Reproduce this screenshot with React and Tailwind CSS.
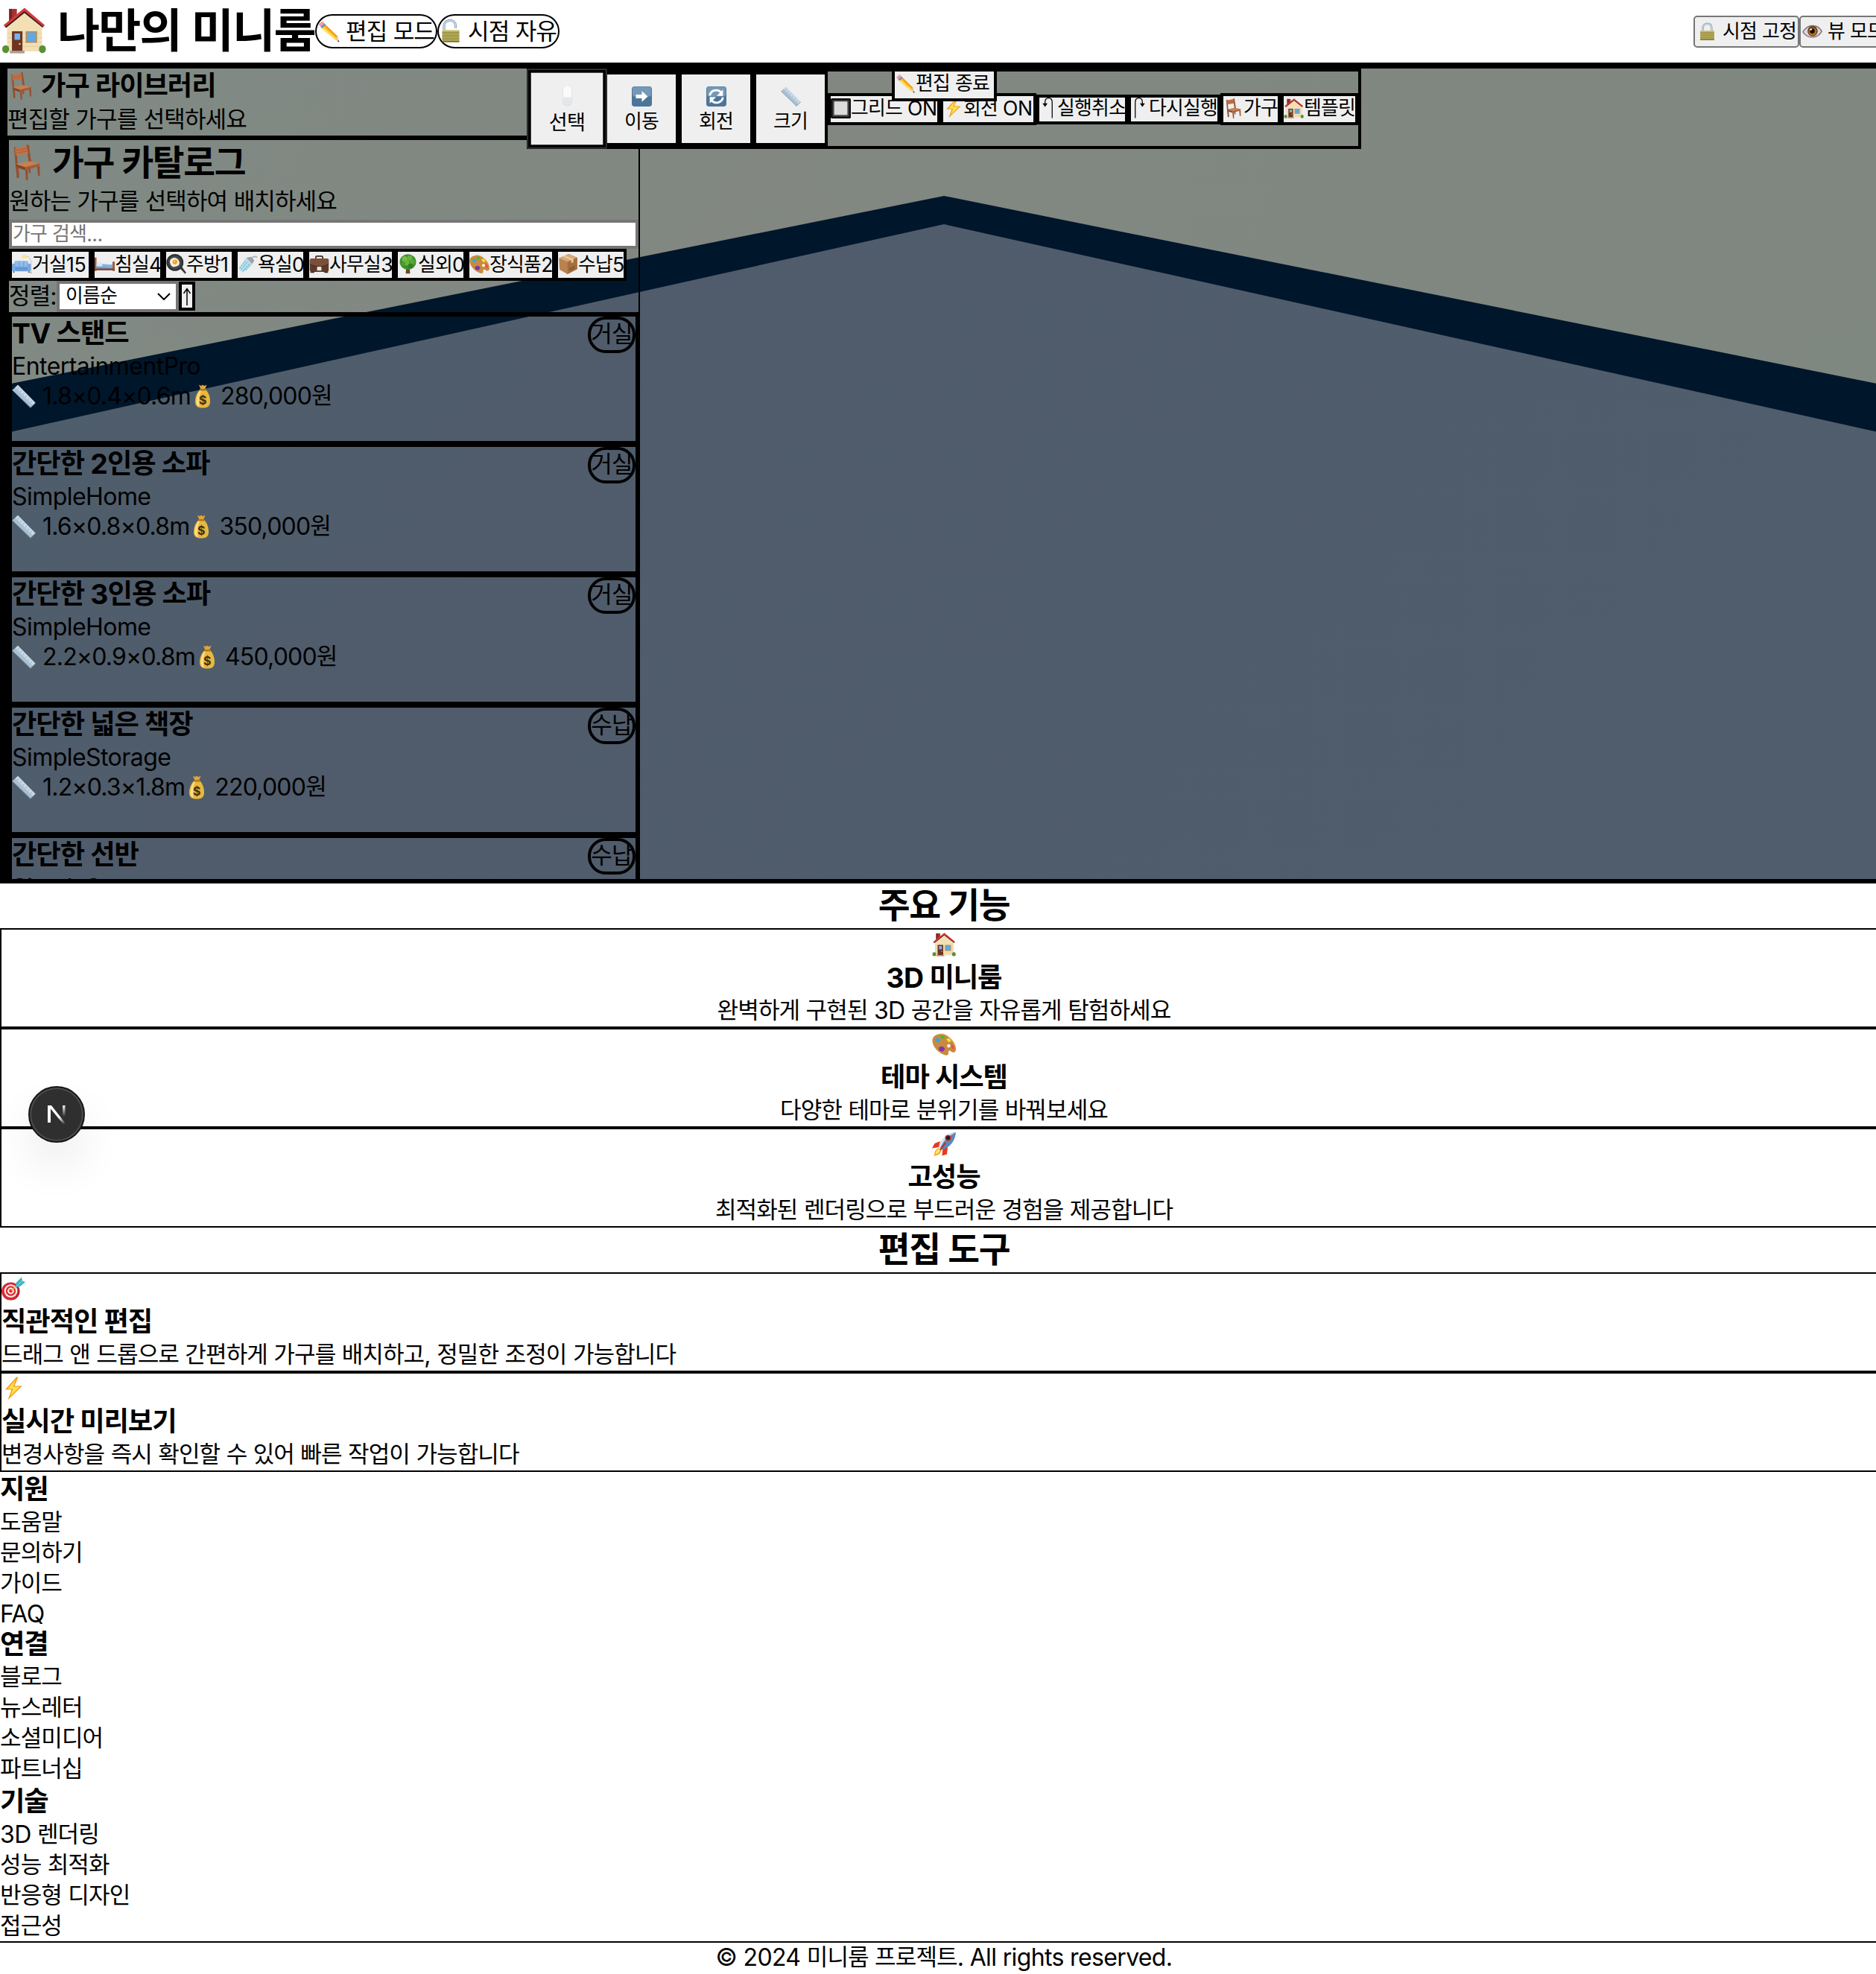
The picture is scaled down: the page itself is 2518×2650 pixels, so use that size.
import React from "react";

/* ---------- text ---------- */

// Hangul and Latin runs get their own spacing, so mixed lines keep an even rhythm.
function T({ children }) {
  const runs = String(children).match(/[\uac00-\ud7a3]+|[^\uac00-\ud7a3]+/g) || [];
  return (
    <span className="whitespace-pre">
      {runs.map((r, i) =>
        /[\uac00-\ud7a3]/.test(r) ? (
          <span key={i} className="align-[0.02em] font-['Noto_Sans_CJK_KR',sans-serif] text-[0.97em] leading-[0] tracking-[-0.029em]">{r}</span>
        ) : (
          <span key={i} className="tracking-[-0.02em]">{r}</span>
        )
      )}
    </span>
  );
}

/* ---------- icons ---------- */

const ICONS = {
  house: (
    <>
      <rect x="5.5" y="1" width="5.5" height="9" fill="#a8322f" />
      <rect x="5.5" y="1" width="2" height="9" fill="#7d201f" />
      <path d="M4 14 16 2.5 29 14v16.5H4z" fill="#f3dfb5" />
      <path d="M4 18h25M4 21h25M4 24h25M4 27h25" stroke="#dfc793" strokeWidth=".35" />
      <path d="M1.500 12.200 16.500 0.300 31 12.200 29.600 13.800 16.400 3.300 3 14z" fill="#d23a38" />
      <path d="M3 13.800 16.400 3.200 29.600 13.600" fill="none" stroke="#3b1d1c" strokeWidth=".9" />
      <rect x="7.5" y="16.5" width="7.5" height="14" fill="#6f3421" />
      <rect x="9.3" y="18" width="4" height="4.4" fill="#6db7ee" />
      <circle cx="13" cy="25.3" r=".7" fill="#f5c55a" />
      <rect x="17.3" y="16.500" width="8.200" height="8" fill="#b39064" />
      <rect x="18.200" y="17.300" width="6.400" height="6.200" fill="#62a9e2" />
      <rect x="6" y="30" width="10.5" height="1.8" fill="#aaa196" />
      <ellipse cx="3" cy="28.900" rx="2.500" ry="2.700" fill="#5b8f35" />
      <ellipse cx="29.300" cy="28.900" rx="2.500" ry="2.700" fill="#5b8f35" />
    </>
  ),
  pencil: (
    <>
      <path d="M2.5 6.5 7.8 2.2 11 6 5.5 10.3z" fill="#f39aa6" />
      <path d="M5.3 9.9 10.7 5.4 12.6 7.8 7.1 12.2z" fill="#5f93bd" />
      <path d="M7.1 12.2 12.6 7.8 28.3 23 24.2 26.8z" fill="#fcc21b" />
      <path d="M10.8 9.2 12.6 7.8 28.3 23 27 24.3z" fill="#f39a17" />
      <path d="M7.1 12.2 9 10.7 25.6 25.4 24.2 26.8z" fill="#ffe067" />
      <path d="M24.2 26.8 28.3 23 30.3 30.6z" fill="#e9c79b" />
      <path d="M28 29.2 29.6 28 30.4 30.8z" fill="#23201e" />
    </>
  ),
  unlock: (
    <>
      <path d="M7 17V9.5C7 4.3 10 1.5 14.8 1.5s7.6 2.8 7.6 7v3.2" fill="none" stroke="#7f97ad" strokeWidth="3.2" />
      <path d="M7 17V9.5C7 4.3 10 1.5 14.8 1.5s7.6 2.8 7.6 7v3.2" fill="none" stroke="#c9e0f3" strokeWidth="1.6" />
      <rect x="4.5" y="14.5" width="23" height="16" rx="1" fill="#b0a758" />
      <path d="M4.5 18h23M4.5 22h23M4.5 26h23" stroke="#8b8337" strokeWidth=".8" />
      <path d="M4.5 29h23v1.5h-23z" fill="#6f6a2a" />
      <path d="M4.5 14.5h23v1.4h-23z" fill="#d8d18a" />
    </>
  ),
  lock: (
    <>
      <path d="M8.5 17V9.5C8.5 5 11.3 2.3 16 2.3s7.5 2.7 7.5 7.2V17" fill="none" stroke="#7f97ad" strokeWidth="3.2" />
      <path d="M8.5 17V9.5C8.5 5 11.3 2.3 16 2.3s7.5 2.7 7.5 7.2V17" fill="none" stroke="#c9e0f3" strokeWidth="1.6" />
      <rect x="4" y="14.5" width="24" height="16" rx="1" fill="#b0a758" />
      <path d="M4 18h24M4 22h24M4 26h24" stroke="#8b8337" strokeWidth=".8" />
      <path d="M4 29h24v1.5H4z" fill="#6f6a2a" />
      <path d="M4 14.5h24v1.4H4z" fill="#d8d18a" />
    </>
  ),
  eye: (
    <>
      <path d="M0 17C5 7.500 10.500 4 17 4c6.500 0 11.500 4.200 15 12-3.600 8-8.500 12.500-15.500 12.500C9.500 28.500 4.200 25 0 17z" fill="#85727a" />
      <path d="M2 17C6 9.500 11 6.500 17 6.500c6 0 10 3.500 13 9.500-3 6.500-7.500 10.500-13.500 10.500S5.500 23.500 2 17z" fill="#dcd6dd" />
      <ellipse cx="16.500" cy="15.800" rx="8" ry="10" fill="#5a3113" />
      <ellipse cx="16.500" cy="16.500" rx="6.600" ry="8" fill="#b0711f" />
      <ellipse cx="16" cy="15.500" rx="3.800" ry="4.800" fill="#170d08" />
      <circle cx="13.800" cy="12.500" r="1.700" fill="#fff" />
    </>
  ),
  chair: (
    <>
      <path d="M4.500 2.500h2.200l2 27.500H7zM15.500 .3h2.200l2.300 15.500h-2.300z" fill="#95502e" />
      <path d="M5.200 3.300 16 1.300 17.300 8 6 9.800z" fill="#c07246" />
      <path d="m5.500 5.500 11-2M5.800 7.700l11-1.800" stroke="#a65d37" strokeWidth=".6" />
      <path d="M6 17.500 18 15 27.500 16.800 14.500 20.300z" fill="#c97f50" />
      <path d="M14.500 20.300 27.500 16.800v2.600l-13 3.600z" fill="#a55c36" />
      <path d="M6 17.500 14.500 20.300V23L6 20z" fill="#834425" />
      <path d="M6.500 19.500h2l.7 9.700H7.500zM14.500 22.500h2.300l.2 9.300h-1.700zM25.300 19.500h2.200l.2 8.500H26zM17.500 21h1.800v4.500h-1.500z" fill="#95502e" />
    </>
  ),
  mouse: (
    <>
      <rect x="9" y="1" width="14" height="30" rx="6" fill="#d5dade" />
      <rect x="9.700" y="1" width="12.600" height="28.500" rx="5.600" fill="#f9fafb" />
      <path d="M10 18h12v6q0 5-6 5.500-6-.5-6-5.500z" fill="#e4e8eb" />
    </>
  ),
  right: (
    <>
      <rect x="0" y="0" width="32" height="32" rx="4.500" fill="#4d7599" />
      <rect x="1" y=".7" width="30" height="15.300" rx="4" fill="#7599b8" />
      <path d="M6.500 13H16V7.500l9.500 8.500L16 24.500V19H6.500z" fill="#fff" />
    </>
  ),
  refresh: (
    <>
      <rect x="0" y="0" width="32" height="32" rx="4.500" fill="#4d7599" />
      <rect x="1" y=".7" width="30" height="15.300" rx="4" fill="#7599b8" />
      <path d="M5.500 14.500a10.500 10.500 0 0 1 18-5M26.500 17.500a10.500 10.500 0 0 1-18 5" fill="none" stroke="#fff" strokeWidth="3.400" />
      <path d="M26.500 5v10h-10zM5.500 27V17h10z" fill="#fff" />
    </>
  ),
  ruler: (
    <>
      <path d="M.5 7.500 8 .8 31.500 24.800 25 31.300z" fill="#aabfd2" />
      <path d="M4.500 4 8 .8 31.500 24.800 28.300 28z" fill="#c8d8e6" />
      <path d="M.5 7.500 25 31.300l6.500-6.500" fill="none" stroke="#7d92a8" strokeWidth="1" />
      <path d="m9.500 4.500-2 1.800M13 8l-2 1.800M16.500 11.600l-2 1.800M20 15.200l-2 1.800M23.500 18.800l-2 1.800M27 22.400l-2 1.800" stroke="#7d92a8" strokeWidth=".7" />
    </>
  ),
  square: (
    <>
      <rect width="32" height="32" rx="2" fill="#111" />
      <rect x="3" y="3" width="26" height="26" fill="#4b4b4b" />
      <rect x="5.500" y="5" width="21" height="21.500" rx="1" fill="#dcdcdc" />
    </>
  ),
  bolt: (
    <>
      <path d="M20 .5 5 17.500h8.500L8.500 31.500 28 12.500H17.500L22.500 .8z" fill="#f4a020" />
      <path d="M19 4 8.500 16.300h7.200L12 26 24.500 13.700h-9z" fill="#ffe24d" />
    </>
  ),
  sofa: (
    <>
      <path d="M20 4c7-2 10.500 4 10.500 11v14" fill="none" stroke="#a9b0b8" strokeWidth=".9" />
      <path d="M15.500 6.500C16 3 17.500 1 20 1s4 2 4.300 5.500z" fill="#fbe287" />
      <path d="M28 29h4v1.500h-4z" fill="#a9b0b8" />
      <rect x="4" y="11" width="22" height="11" rx="2" fill="#8ebbea" />
      <path d="M11.300 11.500v9M18.700 11.500v9" stroke="#5f93cc" strokeWidth=".8" />
      <rect x="0" y="15" width="5.500" height="12.500" rx="2" fill="#78a9df" />
      <rect x="24.500" y="15" width="5.500" height="12.500" rx="2" fill="#78a9df" />
      <path d="M5 20h20v7.500H5z" fill="#6d9fd8" />
      <path d="M5 23.500h20" stroke="#4f82bd" strokeWidth=".8" />
      <path d="M2 27.500h2v2H2zM26 27.500h2v2h-2z" fill="#6c4a34" />
    </>
  ),
  bed: (
    <>
      <path d="M0 5.500h3V27H0zM28.500 12H32v15h-3.500z" fill="#a05a35" />
      <path d="M3 15.500 28.500 17v8L3 23.500z" fill="#6a9fd3" />
      <path d="M3 15.500c2-2.500 8-2.500 10 .5L28.500 17.500v3L3 19.500z" fill="#d6e6f5" />
      <path d="M0 23h32v3H0z" fill="#8a4a29" />
      <path d="M12 16.300 28.500 17.500V22L12 21z" fill="#7fb0e0" />
    </>
  ),
  pan: (
    <>
      <path d="m21 22 3-3 7.500 10q.5 2-1.500 2.500z" fill="#3a3a3c" />
      <circle cx="14" cy="13.500" r="13.500" fill="#2e3133" />
      <circle cx="14" cy="13.500" r="10.800" fill="#47494c" />
      <path d="M7 9c3-4 9-4 12 0s3 8-1 10-8 2-10-1-3-6-1-9z" fill="#f7f4ea" />
      <circle cx="14" cy="12.500" r="4" fill="#f5a51f" />
      <circle cx="13" cy="11.200" r="1.200" fill="#fde18b" />
    </>
  ),
  shower: (
    <>
      <path d="M31 5c-3.500-2-6-1.500-8.500 1.500" fill="none" stroke="#a3aeb5" strokeWidth="2" />
      <path d="m14 6 9 10 3.500-6-5-5.500z" fill="#95a3ab" />
      <path d="m13.500 5.800 10 10.700-2.200 2L11.800 8z" fill="#c5d0d6" />
      <path d="m12 8.500 9.300 10L8 30 2 24z" fill="#8fd6e6" opacity=".6" />
      <path d="m12 11-9 11M15 13 5 25M18 16 8 28M20 18l-8 9" stroke="#4fb4cf" strokeWidth="1.200" strokeDasharray="2.500 1.500" />
    </>
  ),
  briefcase: (
    <>
      <path d="M10.500 8V5.500q0-2 2-2h7q2 0 2 2V8" fill="none" stroke="#3c2a22" strokeWidth="2" />
      <rect x="1" y="7.500" width="30" height="21" rx="2.500" fill="#5b3a2b" />
      <path d="M1 10q0-2.500 2.500-2.500h25Q31 7.500 31 10v6q-7 4-15 4T1 16z" fill="#7b4f3a" />
      <path d="M1 16q7 4 15 4t15-4" fill="none" stroke="#3c241a" />
      <rect x="12.500" y="20" width="7" height="6.500" rx="1" fill="#e7e3dc" />
      <path d="M2 28.500h6v1.500H2zM24 28.500h6v1.500h-6z" fill="#3c241a" />
    </>
  ),
  tree: (
    <>
      <path d="M13.500 18h5l1 13h-7z" fill="#6d4526" />
      <ellipse cx="16" cy="12.500" rx="13" ry="12.300" fill="#3f8f2c" />
      <circle cx="11" cy="8" r="4.500" fill="#71bf44" />
      <circle cx="19" cy="6.500" r="4" fill="#65b53d" />
      <circle cx="23" cy="12.500" r="4" fill="#58a636" />
      <circle cx="14" cy="14" r="4.500" fill="#66b53e" />
      <circle cx="8.500" cy="15.500" r="3.500" fill="#4f9b31" />
      <circle cx="20" cy="19" r="4" fill="#347c25" />
    </>
  ),
  palette: (
    <>
      <path d="M11 2C20 1 31 12 32 22c.4 5-4 6-6.500 3.500-2-2-4-.5-3.500 2 .4 3-2.500 4-6 2.500C7 26.500 0 18 .5 10 1 5 5.500 2.500 11 2z" fill="#c98a3d" />
      <path d="M11 2C20 1 31 12 32 22" fill="none" stroke="#e0ab62" strokeWidth="1" />
      <circle cx="22.500" cy="18" r="2.300" fill="#fff" />
      <path d="M3.500 9.500 8 7l3.500 3L8 14z" fill="#31a8e0" />
      <path d="m11 4.500 5-.5 1.500 4-5 .5z" fill="#4ab53a" />
      <path d="m19 9 4-1.500 3 4.500-4 1z" fill="#f7e03c" />
      <path d="M26 15.500q4 2 3.500 7-3.500 0-4-4z" fill="#ef4e4a" />
      <path d="m9 20 5-1.500 3.500 3.500-3 4-5-1.500z" fill="#8035a8" />
    </>
  ),
  package: (
    <>
      <path d="M1.500 6.500 17 0l13.500 5.500V24L15 32 2.500 25z" fill="#b98251" />
      <path d="M1.500 6.500 17 0l13.500 5.500L15 12.500z" fill="#d8a773" />
      <path d="M15 12.500 30.500 5.500V24L15 32z" fill="#a46f40" />
      <path d="M7.500 4 11.500 2.300 24.500 8v5l-3.500 1.500V9.800z" fill="#e8c79c" />
      <path d="M18 22.500 27 18v5l-9 4.500z" fill="#8f5e34" />
    </>
  ),
  money: (
    <>
      <path d="M11 .5 14 2l2-1.500L18 2l3.500-1.200-2.500 6h-5.500z" fill="#e0a637" />
      <path d="M12.500 7h7.500c4 4 6 10 6 16 0 6-3 8.500-10 8.500S6 29 6 23c0-6 2.500-12 6.500-16z" fill="#e9b83e" />
      <path d="M12.500 8c-3 4-5 9-5 15 0 5 2 6 4 7-1-8-.5-16 3-22z" fill="#fadf83" />
      <path d="M12 6h8.500v2.500H12z" fill="#b3781c" />
      <text x="16.300" y="26.500" textAnchor="middle" fontSize="16" fontWeight="700" fontFamily="Inter, sans-serif" fill="#3f3312">$</text>
    </>
  ),
  rocket: (
    <>
      <path d="M11 12 3.500 15 0 21.500l9-1.500zM21 20l-1 9.500-6.500 2 1-10z" fill="#e8381f" />
      <path d="M32 0C23 1 14 6 9.500 19.500l4 4C25 20 31 11 32 0z" fill="#5c88ba" />
      <path d="M32 0C23 1 14 6 9.500 19.500l1.500 1.500C16 10 22 5 32 0z" fill="#d5e3ef" />
      <circle cx="21.500" cy="7.500" r="4" fill="#c9281f" />
      <circle cx="21.500" cy="7.500" r="2.500" fill="#14202c" />
      <path d="m9 21 4 4-4 5-6.500 2 1.500-7z" fill="#f8a923" />
      <path d="m9 22.500 2 2-3 3.500-3.500 1.500.8-3.500z" fill="#fff06a" />
      <path d="m18 14-7 10" stroke="#c9281f" strokeWidth="2" />
    </>
  ),
  dart: (
    <>
      <circle cx="12.500" cy="19.500" r="12" fill="#a8171d" />
      <circle cx="11.500" cy="19.500" r="11.500" fill="#dc2a31" />
      <circle cx="12.500" cy="19" r="8.800" fill="#fbeff0" />
      <circle cx="12.500" cy="19" r="6.700" fill="#dc2a31" />
      <circle cx="12.500" cy="19" r="4.400" fill="#fbeff0" />
      <circle cx="12.500" cy="19" r="2.400" fill="#dc2a31" />
      <path d="m13 18.500 11-10" stroke="#e6b52e" strokeWidth="1.500" />
      <path d="m19 14 .5-6L27 .5l1 5 4 1.500-7 6z" fill="#41b3c4" />
      <path d="m20.500 12.500 7-7" stroke="#8ee0e8" />
    </>
  ),
};

function Icon({ name, className }) {
  return (
    <svg viewBox="0 0 32 32" preserveAspectRatio="none" className={"shrink-0 " + className}>
      {ICONS[name]}
    </svg>
  );
}

/* ---------- header ---------- */

function Header() {
  return (
    <header className="flex h-[92px] items-center border-b-8 border-black">
      <h1 className="flex w-[423px] shrink-0 items-center text-[64px] leading-[84px] font-bold whitespace-nowrap">
        <Icon name="house" className="-mt-0.5 mr-[15px] ml-0.5 h-[62px] w-[60px]" />
        <T>나만의 미니룸</T>
      </h1>
      <div className="flex">
        <Pill icon="pencil">편집 모드</Pill>
        <Pill icon="unlock">시점 자유</Pill>
      </div>
      <div className="mr-[-16px] ml-auto flex">
        <button className="flex h-[43px] w-[142px] items-center rounded-[5px] border-2 border-[#767676] bg-[#efefef] pl-1 text-[26.67px] leading-[38px] whitespace-nowrap">
          <Icon name="lock" className="mr-2 size-[25px]" /><T>시점 고정</T>
        </button>
        <button className="flex h-[43px] w-[119px] items-center rounded-[5px] border-2 border-[#767676] bg-[#efefef] pl-0.5 text-[26.67px] leading-[38px] whitespace-nowrap">
          <Icon name="eye" className="mr-[7px] h-[22px] w-[27px]" /><T>뷰 모드</T>
        </button>
      </div>
    </header>
  );
}

function Pill({ icon, children }) {
  return (
    <div className="flex h-[46px] w-[164px] items-center rounded-full border-2 border-black text-[32px] leading-[41px] whitespace-nowrap">
      <Icon name={icon} className="mr-[7px] size-8" />
      <T>{children}</T>
    </div>
  );
}

/* ---------- room view ---------- */

function RoomCanvas() {
  return (
    <svg className="absolute inset-0 h-[1088px] w-[2534px]" viewBox="0 92 2534 1088">
      <defs>
        <linearGradient id="wall" x1="0" y1="0" x2="1" y2="0.3">
          <stop offset="0" stopColor="#808a85" />
          <stop offset=".4" stopColor="#828781" />
          <stop offset="1" stopColor="#7f8781" />
        </linearGradient>
        <linearGradient id="floor" x1="0" y1="0" x2="1" y2="0.3">
          <stop offset="0" stopColor="#4e5e6c" />
          <stop offset=".35" stopColor="#505c6b" />
          <stop offset="1" stopColor="#505d6c" />
        </linearGradient>
      </defs>
      <rect y="92" width="2534" height="1088" fill="url(#wall)" />
      <path d="M0 518 1267 263 2534 518V1180H0z" fill="#00162b" />
      <path d="M0 583 1267 301 2534 583V1180H0z" fill="url(#floor)" />
    </svg>
  );
}

const CHIPS = [
  ["sofa", "거실15", "w-[111px]"],
  ["bed", "침실4", "w-[96px]"],
  ["pan", "주방1", "w-[96px]"],
  ["shower", "욕실0", "w-[96px]"],
  ["briefcase", "사무실3", "w-[119px]"],
  ["tree", "실외0", "w-[96px]"],
  ["palette", "장식품2", "w-[119px]"],
  ["package", "수납5", "w-[96px]"],
];

const ITEMS = [
  ["TV 스탠드", "EntertainmentPro", "1.8×0.4×0.6m", "280,000원", "거실"],
  ["간단한 2인용 소파", "SimpleHome", "1.6×0.8×0.8m", "350,000원", "거실"],
  ["간단한 3인용 소파", "SimpleHome", "2.2×0.9×0.8m", "450,000원", "거실"],
  ["간단한 넓은 책장", "SimpleStorage", "1.2×0.3×1.8m", "220,000원", "수납"],
  ["간단한 선반", "SimpleStorage", "0.8×0.3×1.2m", "80,000원", "수납"],
];

function Sidebar() {
  return (
    <aside className="relative flex h-[1088px] w-[859px] flex-col overflow-hidden border-r-2 border-black whitespace-nowrap">
      <div className="h-24 shrink-0 border-b-6 border-l-10 border-black">
        <h3 className="flex h-[46px] items-center text-[37.44px] leading-[46px] font-bold">
          <Icon name="chair" className="mr-2 size-[37px]" />
          <span className="pt-0.5"><T>가구 라이브러리</T></span>
        </h3>
        <p className="h-11 text-[32px] leading-[46px]"><T>편집할 가구를 선택하세요</T></p>
      </div>
      <div className="h-[231px] shrink-0 border-l-12 border-black">
        <h2 className="flex h-[60px] items-center text-[48px] leading-[60px] font-bold">
          <Icon name="chair" className="mr-2.5 size-12" />
          <span className="pt-0.5"><T>가구 카탈로그</T></span>
        </h2>
        <p className="h-[47px] text-[32px] leading-[45px]"><T>원하는 가구를 선택하여 배치하세요</T></p>
        <div className="h-[39px] border-4 border-[#767676] bg-white pl-px text-[26.67px] leading-[31px] text-[#757575]">
          <T>가구 검색...</T>
        </div>
        <div className="flex">
          {CHIPS.map(([icon, label, w]) => (
            <button key={label} className={"flex h-[43px] items-center border-4 border-black bg-[#efefef] pb-px text-[26.67px] leading-[34px] " + w}>
              <Icon name={icon} className="-mt-0.5 size-[27px]" />
              <T>{label}</T>
            </button>
          ))}
        </div>
        <div className="flex h-[42px] items-center">
          <label className="w-16 text-[32px] leading-[42px]"><T>정렬:</T></label>
          <div className="flex h-[42px] w-[164px] items-center border-4 border-[#767676] bg-white pb-px pl-2 text-[26.67px] leading-[33px]">
            <T>이름순</T>
            <svg viewBox="0 0 18 10" className="mr-[7px] ml-auto h-2.5 w-[18px]">
              <path d="m1 1 8 8 8-8" fill="none" stroke="#000" strokeWidth="2" />
            </svg>
          </div>
          <button className="-mt-[1px] flex h-[39px] w-[22px] items-center justify-center border-4 border-black bg-[#efefef]">
            <svg viewBox="0 0 12 24" className="h-6 w-3 shrink-0">
              <path d="M6 24V2M1.500 8 6 1.500 10.500 8" fill="none" stroke="#000" strokeWidth="1.500" />
            </svg>
          </button>
        </div>
      </div>
      <div className="h-[761px] shrink-0 overflow-hidden border-t-2 border-r-4 border-l-12 border-black">
        {ITEMS.map(([name, brand, size, price, tag]) => (
          <article key={name} className="relative h-[175px] border-4 border-r-0 border-black text-[32px]">
            <h3 className="text-[37.44px] leading-[46px] font-bold"><T>{name}</T></h3>
            <p className="leading-[42px] tracking-[-0.55px]">{brand}</p>
            <div className="flex h-[38px] items-center leading-[38px]">
              <Icon name="ruler" className="mr-[9px] size-8" />
              <span className="tracking-[-0.8px]">{size}</span>
              <Icon name="money" className="mr-2 size-8" />
              <span className="tracking-[-0.8px]">{price.slice(0, -1)}</span>
              <T>{price.slice(-1)}</T>
            </div>
            <div className="absolute top-0 right-0 flex h-[49px] w-16 items-center justify-center rounded-[24px] border-4 border-black pb-0.5 leading-[39px]">
              <T>{tag}</T>
            </div>
          </article>
        ))}
      </div>
    </aside>
  );
}

const TOOLS = [
  ["mouse", "선택"],
  ["right", "이동"],
  ["refresh", "회전"],
  ["ruler", "크기"],
];

function UndoArrow({ flip }) {
  return (
    <svg viewBox="0 0 24 30" className={"mr-px h-[30px] w-[23px] shrink-0 " + (flip ? "-scale-x-100" : "")}>
      <path d="M18 29V7q0-6-5-6T8 7v3" fill="none" stroke="#000" strokeWidth="1.300" />
      <path d="M4.500 8.500h7L8 13.500z" fill="#000" />
    </svg>
  );
}

const ACTIONS = [
  [<Icon name="square" className="size-[27px]" />, "그리드 ON", "h-[43px] w-[151px]"],
  [<Icon name="bolt" className="size-[27px]" />, "회전 ON", "h-[43px] w-[129px]"],
  [<UndoArrow />, "실행취소", "h-10 w-[123px]"],
  [<UndoArrow flip />, "다시실행", "h-10 w-[124px]"],
  [<Icon name="chair" className="size-[27px]" />, "가구", "h-[43px] w-[81px]"],
  [<Icon name="house" className="size-[27px]" />, "템플릿", "h-[43px] w-[104px]"],
];

function Toolbar() {
  return (
    <div className="absolute top-0 left-[707px] flex h-[108px] w-[1120px] border-4 border-black text-[26.67px] leading-[34px] whitespace-nowrap">
      {TOOLS.map(([icon, label], i) => (
        <button
          key={label}
          className={
            "flex size-[100px] shrink-0 flex-col items-center border-4 border-black bg-[#efefef] pt-4 " +
            (i === 0 ? "relative scale-105 outline outline-[#3a3a3a]" : "")
          }
        >
          <Icon name={icon} className="mb-[3px] size-[27px]" />
          <span><T>{label}</T></span>
        </button>
      ))}
      <div className="mt-[29px] flex h-[43px] items-center">
        {ACTIONS.map(([icon, label, size]) => (
          <button key={label} className={"flex shrink-0 items-center border-4 border-black bg-[#efefef] pb-[3px] leading-[30px] " + size}>
            {icon}
            <T>{label}</T>
          </button>
        ))}
      </div>
      <button className="absolute -top-1 left-[486px] flex h-11 w-[141px] items-center border-4 border-black bg-[#efefef] pb-1">
        <Icon name="pencil" className="size-7" />
        <T>편집 종료</T>
      </button>
    </div>
  );
}

/* ---------- sections ---------- */

const FEATURES = [
  ["house", "3D 미니룸", "완벽하게 구현된 3D 공간을 자유롭게 탐험하세요"],
  ["palette", "테마 시스템", "다양한 테마로 분위기를 바꿔보세요"],
  ["rocket", "고성능", "최적화된 렌더링으로 부드러운 경험을 제공합니다"],
];

const EDITING = [
  ["dart", "직관적인 편집", "드래그 앤 드롭으로 간편하게 가구를 배치하고, 정밀한 조정이 가능합니다"],
  ["bolt", "실시간 미리보기", "변경사항을 즉시 확인할 수 있어 빠른 작업이 가능합니다"],
];

const LINKS = [
  ["지원", ["도움말", "문의하기", "가이드", "FAQ"]],
  ["연결", ["블로그", "뉴스레터", "소셜미디어", "파트너십"]],
  ["기술", ["3D 렌더링", "성능 최적화", "반응형 디자인", "접근성"]],
];

function Section({ title, cards, center }) {
  return (
    <section>
      <h2 className="h-[60px] text-center text-[48px] leading-[60px] font-bold"><T>{title}</T></h2>
      {cards.map(([icon, name, text]) => (
        <div key={name} className={"flex h-[134px] flex-col border-2 border-black " + (center ? "items-center" : "items-start")}>
          <div className="flex h-[42px] items-center pb-0.5"><Icon name={icon} className="size-8" /></div>
          <h3 className="text-[37.44px] leading-[46px] font-bold"><T>{name}</T></h3>
          <p className="text-[32px] leading-[42px]"><T>{text}</T></p>
        </div>
      ))}
    </section>
  );
}

function DevBadge() {
  return (
    <div className="absolute top-[1458px] left-[38px] flex size-[76px] items-center justify-center rounded-full border-2 border-[#171717] bg-[#2f2f2f] shadow-[inset_0_0_0_2px_#4d4d4d,0_32px_64px_-8px_rgba(0,0,0,0.12)]">
      <svg viewBox="0 0 26 30" className="h-[30px] w-[26px]">
        <defs>
          <linearGradient id="diag" x1="14" y1="14" x2="24" y2="28" gradientUnits="userSpaceOnUse">
            <stop offset=".3" stopColor="#fff" />
            <stop offset="1" stopColor="#fff" stopOpacity="0" />
          </linearGradient>
          <linearGradient id="stem" x1="0" y1="2" x2="0" y2="18" gradientUnits="userSpaceOnUse">
            <stop stopColor="#fff" />
            <stop offset="1" stopColor="#fff" stopOpacity="0" />
          </linearGradient>
        </defs>
        <path d="M1 3h5L26 28.500 23.500 30 5 7.500V26H1z" fill="url(#diag)" />
        <rect x="21" y="3" width="3.500" height="16" fill="url(#stem)" />
      </svg>
    </div>
  );
}

export default function App() {
  return (
    <div className="relative h-[2650px] w-full overflow-hidden bg-white font-[Inter,'Noto_Sans_CJK_KR',sans-serif] text-black">
      <Header />
      <div className="w-[2534px]">
        <main className="relative h-[1094px] border-b-6 border-black">
          <RoomCanvas />
          <Sidebar />
          <Toolbar />
        </main>
        <Section title="주요 기능" cards={FEATURES} center />
        <Section title="편집 도구" cards={EDITING} />
        <footer>
          {LINKS.map(([title, links]) => (
            <div key={title}>
              <h3 className="text-[37.44px] leading-[47px] font-bold"><T>{title}</T></h3>
              <ul className="text-[32px] leading-[41px]">
                {links.map((l) => (
                  <li key={l} className={l === "FAQ" ? "h-[38px]" : "h-[41px]"}><T>{l}</T></li>
                ))}
              </ul>
            </div>
          ))}
          <div className="border-t-2 border-black text-center text-[32px] leading-[40px]"><T>© 2024 미니룸 프로젝트. All rights reserved.</T></div>
        </footer>
      </div>
      <DevBadge />
    </div>
  );
}
